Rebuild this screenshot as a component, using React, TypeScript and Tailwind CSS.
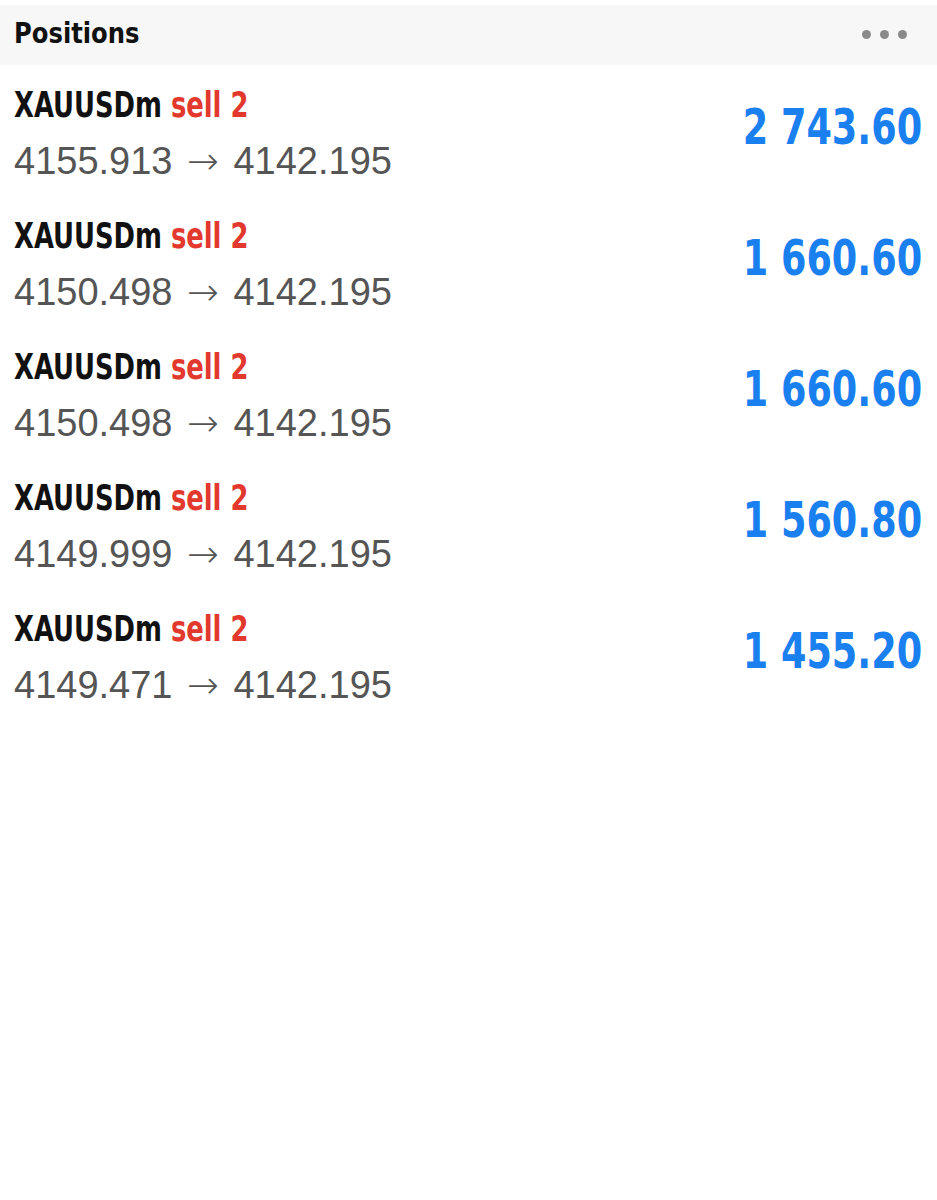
const positions = [
  { open: '4155.913', close: '4142.195', profit: '2 743.60' },
  { open: '4150.498', close: '4142.195', profit: '1 660.60' },
  { open: '4150.498', close: '4142.195', profit: '1 660.60' },
  { open: '4149.999', close: '4142.195', profit: '1 560.80' },
  { open: '4149.471', close: '4142.195', profit: '1 455.20' },
]

// narrow bold face for the symbol line, title and profit
const condensed = "font-['DejaVu_Sans_Condensed','DejaVu_Sans',sans-serif] [font-stretch:condensed] font-bold"

export default function App() {
  return (
    <div className="w-[937px] h-[1200px] bg-white pt-[5px]">
      {/* header */}
      <div className="h-[60px] bg-[#f7f7f7] flex items-center justify-between pl-[14px] pr-[30px]">
        <span className={`${condensed} inline-block origin-left scale-x-[0.93] text-[29px] leading-[40px] mb-[4px] text-[#111]`}>
          Positions
        </span>
        <div className="flex gap-[9px] mb-[2px]">
          <span className="w-[9px] h-[9px] rounded-full bg-[#8a8a8a]" />
          <span className="w-[9px] h-[9px] rounded-full bg-[#8a8a8a]" />
          <span className="w-[9px] h-[9px] rounded-full bg-[#8a8a8a]" />
        </div>
      </div>

      {/* positions list */}
      <div className="pt-[18px]">
        {positions.map((p, i) => (
          <div key={i} className="h-[131px] flex items-start justify-between pl-[14px] pr-[15px]">
            <div className="flex flex-col items-start">
              <div className={`${condensed} inline-block origin-left scale-x-[0.82] text-[35px] leading-[44px] text-[#111] whitespace-nowrap`}>
                XAUUSDm <span className="text-[#e2382d]">sell 2</span>
              </div>
              <div className="mt-[11px] font-['Liberation_Sans',sans-serif] text-[38px] leading-[46px] text-[#555] whitespace-nowrap">
                {p.open}{' '}
                <span className="font-['DejaVu_Sans',sans-serif] font-extralight text-[38px] px-[4px]">→</span>
                {' '}{p.close}
              </div>
            </div>
            <div className={`${condensed} inline-block origin-right scale-x-[0.83] text-[49px] leading-[60px] mt-[15px] text-[#1a80f0] whitespace-nowrap`}>
              {p.profit}
            </div>
          </div>
        ))}
      </div>
    </div>
  )
}
